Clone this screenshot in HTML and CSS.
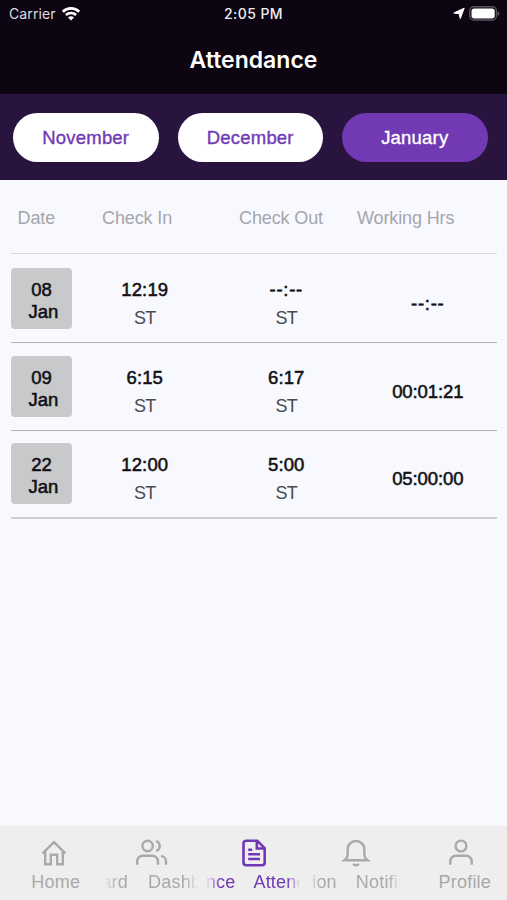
FILE: index.html
```html
<!DOCTYPE html>
<html lang="en">
<head>
<meta charset="utf-8">
<meta name="viewport" content="width=device-width, initial-scale=1">
<title>Attendance</title>
<link rel="stylesheet" href="styles.css">
</head>
<body>
<div class="app">
  <header class="top">
    <div class="status">
      <div class="carrier"><span>Carrier</span>
        <svg width="20" height="16" viewBox="0 0 20 16" fill="none" stroke="#fff" stroke-width="2.6"><path d="M1.8 5.7a11.8 11.8 0 0 1 16.4 0"/><path d="M4.9 9a7.4 7.4 0 0 1 10.2 0"/><path d="M10 14.6l-3-3a4.3 4.3 0 0 1 6 0z" fill="#fff" stroke="none"/></svg>
      </div>
      <time class="clock">2:05 PM</time>
      <div class="power">
        <svg width="12" height="13" viewBox="0 0 12 13"><path d="M11.2 1.2L7.3 11.6 6.2 6.800.8 6z" fill="#fff" stroke="#fff" stroke-width="1" stroke-linejoin="round"/></svg>
        <svg width="31" height="15" viewBox="0 0 31 15"><rect x=".8" y=".8" width="26.6" height="13.2" rx="4" fill="none" stroke="#58545d" stroke-width="1.4"/><rect x="2.5" y="2.4" width="23.2" height="10" rx="2.6" fill="#fff"/><path d="M28.7 5v5q1.6-1 1.6-2.5T28.7 5z" fill="#68646d"/></svg>
      </div>
    </div>
    <h1 class="title">Attendance</h1>
  </header>

  <nav class="months">
    <button class="month">November</button>
    <button class="month">December</button>
    <button class="month month-active">January</button>
  </nav>

  <main class="sheet">
    <div class="head"><span>Date</span><span>Check In</span><span>Check Out</span><span>Working Hrs</span></div>
    <div class="row">
      <div class="date"><span>08</span><span class="mon">Jan</span></div>
      <div class="cell"><b>12:19</b><span>ST</span></div>
      <div class="cell"><b class="blank">--:--</b><span>ST</span></div>
      <div class="hours blank">--:--</div>
    </div>
    <div class="row">
      <div class="date"><span>09</span><span class="mon">Jan</span></div>
      <div class="cell"><b>6:15</b><span>ST</span></div>
      <div class="cell"><b>6:17</b><span>ST</span></div>
      <div class="hours">00:01:21</div>
    </div>
    <div class="row row-last">
      <div class="date"><span>22</span><span class="mon">Jan</span></div>
      <div class="cell"><b>12:00</b><span>ST</span></div>
      <div class="cell"><b>5:00</b><span>ST</span></div>
      <div class="hours">05:00:00</div>
    </div>
  </main>

  <footer class="tabs">
    <a class="tab tab-home">
      <svg class="icon" viewBox="0 0 30 30"><path d="M3.6 15.4L15 4.2l11.4 11.2M6.2 13.2v13.1h5.6v-9.6h6.4v9.6h5.6V13.2"/></svg>
      <span class="label">Home</span>
    </a>
    <a class="tab">
      <svg class="icon icon-wide" viewBox="0 0 34 30"><circle cx="12.6" cy="8" r="5.2"/><path d="M2.2 26.8v-3.6a5.5 5.5 0 0 1 5.500-5.500h9.800a5.500 5.500 0 0 1 5.500 5.500v3.600M21 3.100a5.100 5.100 0 0 1 0 9.800M26 17.900a5.600 5.600 0 0 1 5 5.600v3.300"/></svg>
      <span class="label marquee"><span>ard</span><span>Dashb</span></span>
    </a>
    <a class="tab tab-active">
      <svg class="icon" viewBox="0 0 30 30"><path d="M18.300 2.700H7.200a2.700 2.700 0 0 0-2.700 2.700v19.200a2.700 2.700 0 0 0 2.700 2.700h15.800a2.700 2.700 0 0 0 2.700-2.700V10.200zM17.800 2.700v7.800h7.900M9.200 11.700h4M9.200 16.300h11.800M9.200 21h11.800"/></svg>
      <span class="label marquee marquee-att"><span>nce</span><span>Attend</span></span>
    </a>
    <a class="tab">
      <svg class="icon icon-bell" viewBox="0 0 30 30"><path d="M3.500 22.200h23c-2-1.400-3.200-3.400-3.200-6.200v-4.700a8.300 8.300 0 0 0-16.600 0V16c0 2.800-1.200 4.800-3.200 6.200z"/><path d="M12.300 25.900a3.200 3.200 0 0 0 5.400 0"/></svg>
      <span class="label marquee marquee-not"><span>ion</span><span>Notific</span></span>
    </a>
    <a class="tab tab-profile">
      <svg class="icon" viewBox="0 0 30 30"><circle cx="15" cy="8" r="5.4"/><path d="M4.300 26.800v-3.600a5.500 5.500 0 0 1 5.500-5.500h10.400a5.500 5.500 0 0 1 5.500 5.500v3.600"/></svg>
      <span class="label">Profile</span>
    </a>
  </footer>
</div>
</body>
</html>
```
FILE: styles.css
```css
* { box-sizing: border-box; }
body { margin: 0; font-family: "Liberation Sans", Arial, sans-serif; }
.app { display: flex; flex-direction: column; width: 507px; height: 900px; background: #f8f9fe; overflow: hidden; }

.top { height: 94px; background: #0e0512; color: #fff; font-family: Inter, sans-serif; }
.status { display: grid; grid-template-columns: 1fr auto 1fr; align-items: center; height: 27px; padding: 0 7px 0 9px; }
.carrier { display: flex; align-items: center; gap: 5px; font-size: 14px; color: #dedce0; letter-spacing: 0.1px; }
.clock { margin-right: 2px; font-size: 14px; font-weight: 500; color: #f0eef2; letter-spacing: 0.45px; }
.power { display: flex; justify-content: flex-end; align-items: center; gap: 4px; }
.title { margin: 19px 0 0; text-align: center; font-size: 23px; line-height: 28px; font-weight: 600; }

.months { display: flex; gap: 19px; height: 86px; padding: 19px 13px 0; background: #29133f; }
.month { width: 145.5px; height: 49px; padding: 1px 0 0; border: 0; border-radius: 25px; background: #fff; color: #703ab6; font: 18.5px "Liberation Sans", Arial, sans-serif; letter-spacing: 0.2px; -webkit-text-stroke: 0.35px currentColor; }
.month-active { background: #7139b4; color: #fff; }

.sheet { flex: 1; padding: 0 10px 0 11px; }
.head { display: grid; grid-template-columns: 84.5px 137px 118px 1fr; align-items: center; height: 74px; padding: 3px 0 0 6.5px; border-bottom: 1px solid #d9dade; color: #a5a6ab; font-size: 18px; letter-spacing: -0.12px; }
.row { display: grid; grid-template-columns: 63px 141.5px 141.5px 141.5px; height: 87.5px; padding-top: 13px; border-bottom: 1px solid #b2b3b9; color: #111115; }
.row:nth-child(2) { height: 89px; padding-top: 14px; }
.row-last { height: 88px; padding-top: 12px; border-bottom: 2px solid #cdced2; }
.date { display: flex; flex-direction: column; align-items: center; width: 61px; height: 61px; padding-top: 11px; border-radius: 4px; background: #c8c9cb; font-size: 18.5px; line-height: 22px; -webkit-text-stroke: 0.55px currentColor; }
.mon { padding-left: 4px; }
.cell { display: flex; flex-direction: column; align-items: center; padding-top: 8px; }
.cell b { font-size: 18.5px; line-height: 28px; font-weight: 400; letter-spacing: 0.15px; -webkit-text-stroke: 0.55px currentColor; }
.cell span { font-size: 18px; line-height: 28px; color: #4a4a4e; letter-spacing: -0.8px; }
.hours { padding-top: 22px; text-align: center; font-size: 18.5px; line-height: 28px; letter-spacing: -0.1px; -webkit-text-stroke: 0.55px currentColor; }
.cell .blank, .blank { letter-spacing: 0.7px; }

.tabs { display: grid; grid-template-columns: repeat(5, 1fr); height: 74px; padding-top: 12px; background: #eeeeee; }
.tab { display: flex; flex-direction: column; align-items: center; min-width: 0; color: #a9a9aa; }
.tab-home { padding-left: 10px; }
.tab-profile { padding-left: 17px; }
.tab-active { color: #7038b5; }
.icon { width: 30px; height: 30px; fill: none; stroke: currentColor; stroke-width: 2.4; }
.tab-active .icon { stroke-width: 2.6; margin-left: 1px; }
.icon-bell { margin-left: 2px; }
.tab-profile .icon { margin-right: 8px; }
.tab-home .icon { margin-right: 3px; }
.icon-wide { width: 34px; }
.label { padding-top: 1px; font-size: 18px; line-height: 26px; white-space: nowrap; letter-spacing: 0.2px; }
.marquee { display: flex; gap: 20px; width: 100%; -webkit-mask-image: linear-gradient(90deg, transparent 3px, #000 17px, #000 84px, transparent 97px); mask-image: linear-gradient(90deg, transparent 3px, #000 17px, #000 84px, transparent 97px); }
.marquee-att { gap: 18px; padding-left: 3px; }
.marquee-not { gap: 19px; padding-left: 8px; }
```
